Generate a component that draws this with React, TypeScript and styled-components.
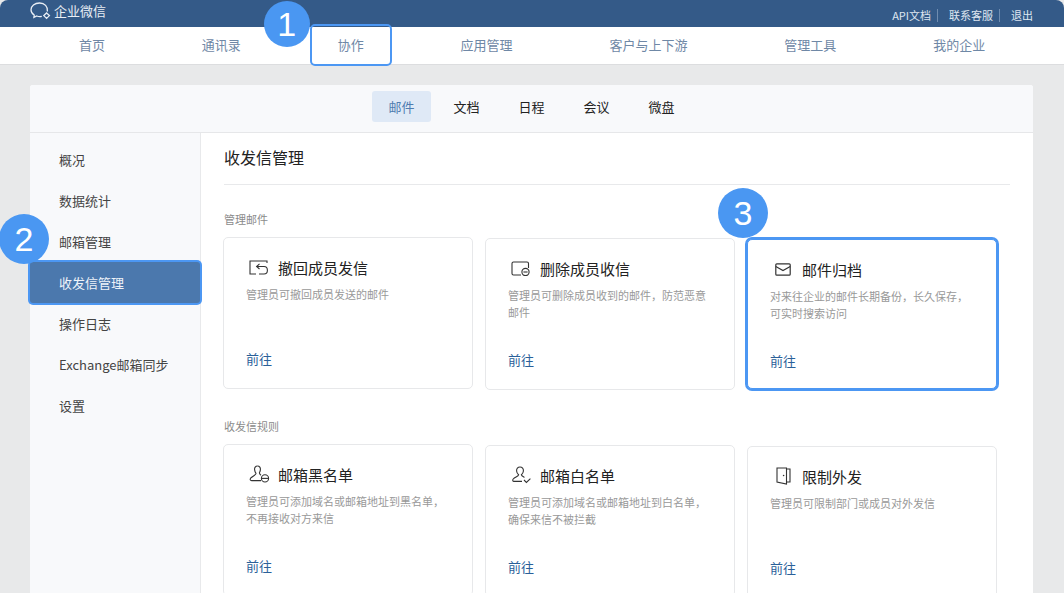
import styled, { createGlobalStyle } from "styled-components";

const GlobalStyle = createGlobalStyle`
  html, body {
    margin: 0;
    padding: 0;
    background: #ffffff;
  }
  body {
    width: 1064px;
    height: 593px;
    overflow: hidden;
    font-family: "Noto Sans CJK SC", "Liberation Sans", sans-serif;
  }
  * {
    box-sizing: border-box;
  }
`;

const Page = styled.div`
  width: 1064px;
  height: 593px;
  overflow: hidden;
  background: #e8e9ea;
`;

const TopBar = styled.div`
  height: 27px;
  background: #345a88;
  border-radius: 8px 8px 0 0;
  display: flex;
  align-items: center;
  justify-content: space-between;
  padding: 0 31px 2px 30px;
  color: #ffffff;
`;

const Logo = styled.div`
  display: flex;
  align-items: center;
  gap: 2px;
  margin-bottom: 4px;
  font-size: 13px;
  color: #e9eef5;
`;

const TopLinks = styled.div`
  display: flex;
  align-items: center;
  margin-top: 5px;
  font-size: 11px;
  color: #dfe7f1;
`;

const TopLink = styled.span<{ $divider?: boolean }>`
  padding-right: ${(p) => (p.$divider ? "6px" : "0")};
  margin-right: ${(p) => (p.$divider ? "11px" : "0")};
  border-right: ${(p) => (p.$divider ? "1px solid #6f8cb0" : "none")};
  line-height: 13px;
`;

const MainNav = styled.div`
  height: 38px;
  background: #ffffff;
  border-bottom: 1px solid #dcdddf;
  display: flex;
  align-items: center;
  gap: 96.85px;
  padding: 0 0 2px 79px;
  font-size: 13px;
  color: #6f88a6;
`;

const NavItem = styled.span<{ $marked?: boolean }>`
  position: relative;
  white-space: nowrap;
  &::after {
    content: ${(p) => (p.$marked ? '""' : "none")};
    position: absolute;
    left: -28px;
    right: -28px;
    top: -11px;
    bottom: -12px;
    border: 2px solid #4c97f3;
    border-radius: 5px;
  }
`;

const Badge = styled.div<{ $left: number; $top: number; $size: number }>`
  position: absolute;
  left: ${(p) => p.$left}px;
  top: ${(p) => p.$top}px;
  width: ${(p) => p.$size}px;
  height: ${(p) => p.$size}px;
  border-radius: 50%;
  background: #4a97f2;
  color: #ffffff;
  font-family: "Liberation Sans", sans-serif;
  font-size: 34px;
  line-height: ${(p) => p.$size}px;
  text-align: center;
  z-index: 5;
`;

const Panel = styled.div`
  margin: 20px 31px 0 30px;
  height: 600px;
  background: #ffffff;
  border-radius: 3px 3px 0 0;
  display: flex;
  flex-direction: column;
`;

const SubNav = styled.div`
  height: 48px;
  background: #f8f9fb;
  border-bottom: 1px solid #e6e7e9;
  border-radius: 3px 3px 0 0;
  display: flex;
  justify-content: center;
  align-items: flex-start;
  gap: 6px;
  padding-top: 6px;
`;

const SubTab = styled.div<{ $active?: boolean }>`
  width: 59px;
  height: 31px;
  line-height: 31px;
  text-align: center;
  font-size: 13px;
  border-radius: 3px;
  color: ${(p) => (p.$active ? "#4f7cb0" : "#222222")};
  background: ${(p) => (p.$active ? "#dfe9f6" : "transparent")};
`;

const Body = styled.div`
  flex: 1;
  display: flex;
`;

const Sidebar = styled.div`
  width: 171px;
  flex-shrink: 0;
  background: #f8f9fb;
  border-right: 1px solid #e8e9eb;
  padding-top: 6px;
`;

const SideItem = styled.div<{ $active?: boolean }>`
  position: relative;
  height: 41px;
  line-height: 41px;
  padding-left: 29px;
  font-size: 13px;
  white-space: nowrap;
  color: ${(p) => (p.$active ? "#eef3f9" : "#444444")};
  background: ${(p) => (p.$active ? "#4b78ad" : "transparent")};
  border-radius: 3px;
  box-shadow: ${(p) => (p.$active ? "0 0 0 2px #4c97f3" : "none")};
`;

const Content = styled.div`
  flex: 1;
  padding: 0 23px 0 23px;
`;

const Title = styled.div`
  height: 52px;
  border-bottom: 1px solid #e8e9eb;
  font-size: 16px;
  line-height: 48px;
  color: #222222;
  margin-bottom: 26px;
`;

const SectionLabel = styled.div`
  font-size: 11px;
  line-height: 16px;
  color: #8b8b8b;
  margin-bottom: 10px;
`;

const CardGrid = styled.div`
  display: grid;
  grid-template-columns: 250px 250px 250px;
  gap: 12px;
  margin-bottom: 28px;
  margin-left: -1px;
`;

const Card = styled.div<{ $marked?: boolean; $shift?: number }>`
  position: relative;
  height: ${(p) => (p.$marked ? "150px" : "152px")};
  margin-top: ${(p) => p.$shift ?? 0}px;
  padding: 19px 22px 0 22px;
  background: #ffffff;
  border: 1px solid #e7e8ea;
  border-radius: 5px;
  display: flex;
  flex-direction: column;
  box-shadow: ${(p) => (p.$marked ? "0 0 0 2px #4c97f3" : "none")};
  border-color: ${(p) => (p.$marked ? "#4c97f3" : "#e7e8ea")};
`;

const CardHead = styled.div`
  display: flex;
  align-items: center;
  gap: 8px;
  height: 20px;
  font-size: 15px;
  color: #222222;
`;

const IconSlot = styled.div`
  width: 22px;
  height: 20px;
  margin-left: 2px;
  display: flex;
  align-items: center;
  justify-content: center;
  color: #333333;
`;

const CardDesc = styled.div`
  margin-top: 9px;
  height: 34px;
  font-size: 11px;
  line-height: 17px;
  color: #999999;
`;

const CardLink = styled.div`
  margin-top: 30px;
  font-size: 13px;
  line-height: 18px;
  color: #2a6099;
`;

const LogoMark = () => (
  <svg width="22" height="18" viewBox="0 0 22 18" fill="none" stroke="#e9eef5" strokeWidth="1.3">
    <path d="M17.4 9.5 C18 4.6 14.6 1 9.6 1 C4.6 1 1 4 1 7.8 C1 10.2 2.4 12 4.2 13 L3.9 15.4 L6.8 14 C8.4 14.6 10.2 14.7 11.8 14.4" />
    <path d="M16.6 11 L19.4 13.6 L16.6 16.4 L13.8 13.6 Z" />
  </svg>
);

const RecallIcon = () => (
  <svg width="20" height="15" viewBox="0 0 20 15" fill="none" stroke="currentColor" strokeWidth="1.1">
    <path d="M18 3 V1 H1 V14 H7" />
    <path d="M10.5 3.8 L7.6 6.5 L10.5 9" />
    <path d="M7.6 6.5 H15 Q18.4 6.5 18.4 10.2 Q18.4 14 15 14 H10" />
  </svg>
);

const DeleteIcon = () => (
  <svg width="20" height="15" viewBox="0 0 20 15" fill="none" stroke="currentColor" strokeWidth="1.1">
    <path d="M10 14 H2.5 Q1 14 1 12.5 V2.5 Q1 1 2.5 1 H16 Q17.5 1 17.5 2.5 V7" />
    <circle cx="14.5" cy="11" r="3.6" fill="#ffffff" />
    <path d="M12.4 11 H16.6" />
  </svg>
);

const MailIcon = () => (
  <svg width="16" height="13" viewBox="0 0 16 13" fill="none" stroke="currentColor" strokeWidth="1.2">
    <rect x="0.8" y="0.8" width="14.4" height="11.4" rx="1" />
    <path d="M0.8 3.6 L8 7.6 L15.2 3.6" />
  </svg>
);

const BlockUserIcon = () => (
  <svg width="21" height="18" viewBox="0 0 21 18" fill="none" stroke="currentColor" strokeWidth="1.1">
    <path d="M8.5 1 C6.4 1 5.4 2.6 5.6 4.6 C5.8 6.4 6.4 7.6 7 8.4 C7 10.2 3.4 11 1.6 13.2 C0.8 14.4 1.2 15.6 2.6 15.6 H12" />
    <path d="M8.5 1 C10.6 1 11.6 2.6 11.4 4.6 C11.3 6 10.9 7 10.4 7.8 C10.4 9 11 9.6 12 10.2" />
    <circle cx="16" cy="13.4" r="3.6" />
    <path d="M12.4 13.4 H19.6" />
  </svg>
);

const AllowUserIcon = () => (
  <svg width="21" height="18" viewBox="0 0 21 18" fill="none" stroke="currentColor" strokeWidth="1.1">
    <path d="M9 1 C6.8 1 5.4 2.8 5.6 5 C5.8 6.8 6.6 8 7.6 8.8 C7.2 10.6 4 11 2.2 13 C1.4 14 1.6 15.4 3 15.4 H11" />
    <path d="M9 1 C11.2 1 12.6 2.8 12.4 5 C12.2 6.8 11.4 8 10.4 8.8 C10.6 10 12 10.6 13.4 11.4" />
    <path d="M13 14 L15.4 16.4 L19.4 12.6" />
  </svg>
);

const DoorIcon = () => (
  <svg width="15" height="18" viewBox="0 0 15 18" fill="none" stroke="currentColor" strokeWidth="1.1">
    <path d="M10.5 1 H1 V15 L10.5 17 V1 Z" />
    <path d="M10.5 2 H14 V15 H10.5" />
    <circle cx="7.6" cy="8.5" r="0.8" fill="currentColor" stroke="none" />
  </svg>
);

const sideItems = ["概况", "数据统计", "邮箱管理", "收发信管理", "操作日志", "Exchange邮箱同步", "设置"];
const navItems = ["首页", "通讯录", "协作", "应用管理", "客户与上下游", "管理工具", "我的企业"];
const subTabs = ["邮件", "文档", "日程", "会议", "微盘"];

const mailCards = [
  { icon: <RecallIcon />, title: "撤回成员发信", desc: "管理员可撤回成员发送的邮件", shift: 0 },
  { icon: <DeleteIcon />, title: "删除成员收信", desc: "管理员可删除成员收到的邮件，防范恶意邮件", shift: 1 },
  { icon: <MailIcon />, title: "邮件归档", desc: "对来往企业的邮件长期备份，长久保存，可实时搜索访问", shift: 2, marked: true },
];

const ruleCards = [
  { icon: <BlockUserIcon />, title: "邮箱黑名单", desc: "管理员可添加域名或邮箱地址到黑名单，不再接收对方来信", shift: 0 },
  { icon: <AllowUserIcon />, title: "邮箱白名单", desc: "管理员可添加域名或邮箱地址到白名单，确保来信不被拦截", shift: 1 },
  { icon: <DoorIcon />, title: "限制外发", desc: "管理员可限制部门或成员对外发信", shift: 2 },
];

type CardData = {
  icon: React.ReactNode;
  title: string;
  desc: string;
  shift: number;
  marked?: boolean;
};

const renderCard = (c: CardData) => (
  <Card key={c.title} $shift={c.shift} $marked={c.marked}>
    {c.marked && (
      <Badge $left={-30} $top={-52} $size={50}>
        3
      </Badge>
    )}
    <CardHead>
      <IconSlot>{c.icon}</IconSlot>
      {c.title}
    </CardHead>
    <CardDesc>{c.desc}</CardDesc>
    <CardLink>前往</CardLink>
  </Card>
);

const App = () => {
  return (
    <>
      <GlobalStyle />
      <Page>
        <TopBar>
          <Logo>
            <LogoMark />
            企业微信
          </Logo>
          <TopLinks>
            <TopLink $divider>API文档</TopLink>
            <TopLink $divider>联系客服</TopLink>
            <TopLink>退出</TopLink>
          </TopLinks>
        </TopBar>
        <MainNav>
          {navItems.map((n) => (
            <NavItem key={n} $marked={n === "协作"}>
              {n === "协作" && (
                <Badge $left={-74} $top={-34} $size={46}>
                  1
                </Badge>
              )}
              {n}
            </NavItem>
          ))}
        </MainNav>
        <Panel>
          <SubNav>
            {subTabs.map((t) => (
              <SubTab key={t} $active={t === "邮件"}>
                {t}
              </SubTab>
            ))}
          </SubNav>
          <Body>
            <Sidebar>
              {sideItems.map((s) => (
                <SideItem key={s} $active={s === "收发信管理"}>
                  {s === "收发信管理" && (
                    <Badge $left={-31} $top={-48} $size={50}>
                      2
                    </Badge>
                  )}
                  {s}
                </SideItem>
              ))}
            </Sidebar>
            <Content>
              <Title>收发信管理</Title>
              <SectionLabel>管理邮件</SectionLabel>
              <CardGrid>{mailCards.map(renderCard)}</CardGrid>
              <SectionLabel>收发信规则</SectionLabel>
              <CardGrid>{ruleCards.map(renderCard)}</CardGrid>
            </Content>
          </Body>
        </Panel>
      </Page>
    </>
  );
};

export default App;
